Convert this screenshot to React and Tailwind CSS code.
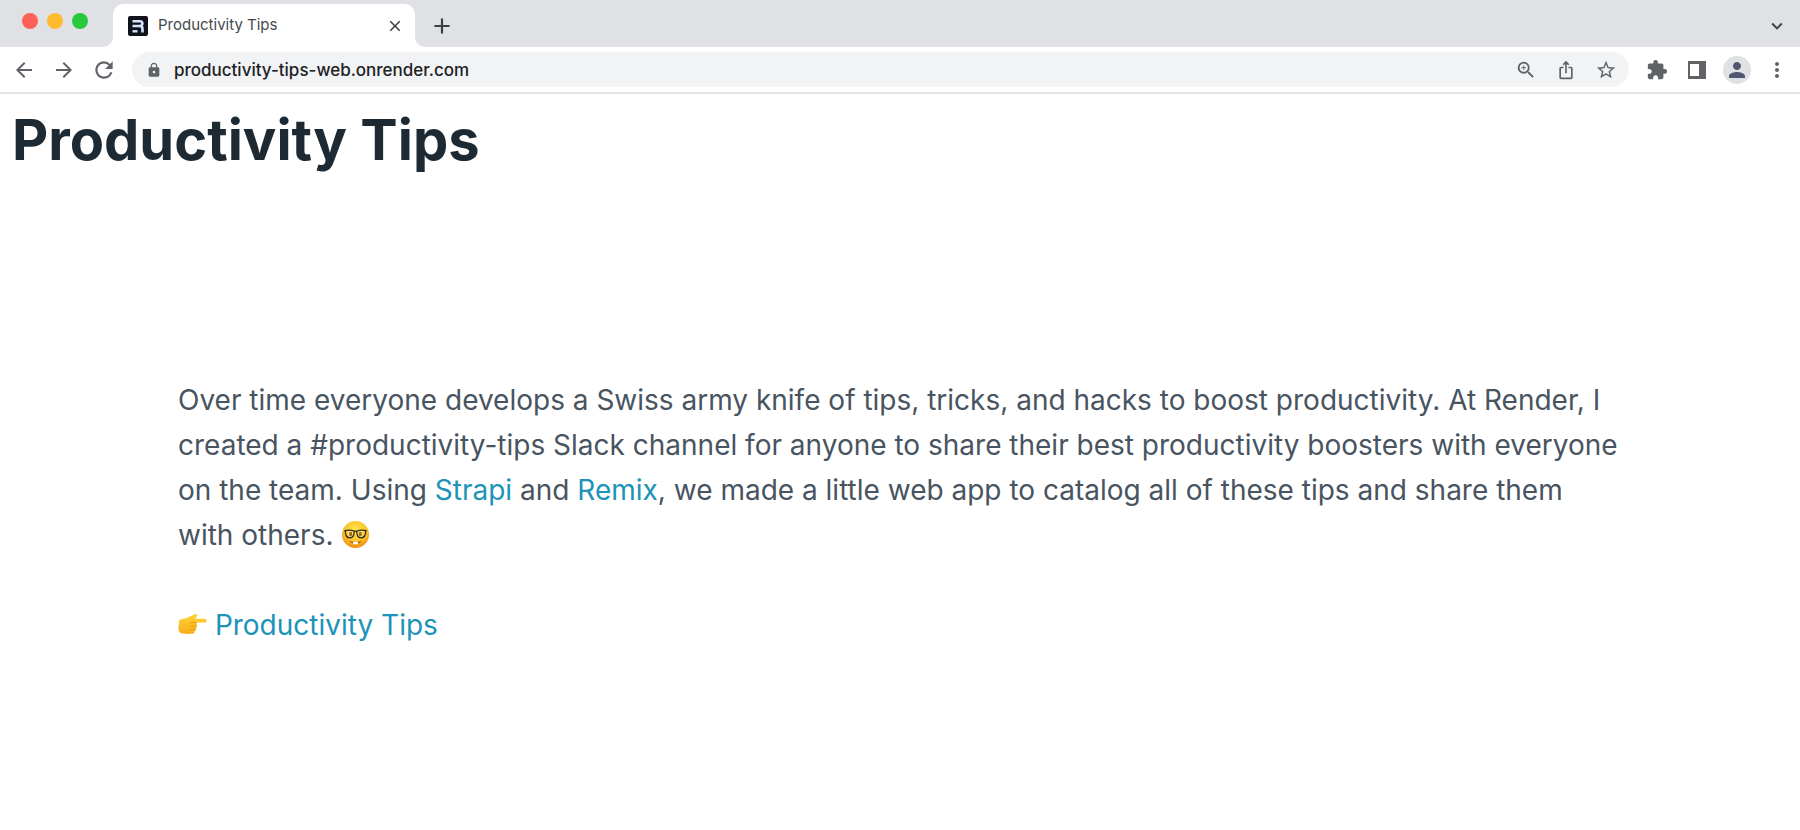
import React from 'react';
import {
    MdAdd,
    MdArrowBack,
    MdArrowForward,
    MdClose,
    MdExpandMore,
    MdExtension,
    MdIosShare,
    MdLock,
    MdMoreVert,
    MdPerson,
    MdRefresh,
    MdStarBorder,
    MdZoomIn,
} from 'react-icons/md';

const IconButton = ({ label, children }) => (
    <button
        type="button"
        aria-label={label}
        className="flex h-9 w-10 shrink-0 items-center justify-center text-[#5f6368]"
    >
        {children}
    </button>
);

const Favicon = () => (
    <svg viewBox="0 0 20 20" className="h-5 w-5 shrink-0" aria-hidden="true">
        <rect width="20" height="20" rx="2" fill="#10131a" />
        <path d="M4.5 5.2H12a2.4 2.4 0 0 1 0 4.8H4.5M11.5 10c2.4 0 3 1 3 2.8v3.700" fill="none" stroke="#d5e2ff" strokeWidth="2.6" />
        <path d="M4.5 15.3h5" stroke="#d5e2ff" strokeWidth="2.4" />
    </svg>
);

const SidePanelIcon = () => (
    <svg viewBox="0 0 18 18" className="h-[18px] w-[18px]" aria-hidden="true">
        <path d="M0 0h18v18H0zM2 3v12h9V3z" fill="#5f6368" fillRule="evenodd" />
    </svg>
);

// The little concave feet where the tab meets the toolbar
const TabFoot = ({ flip }) => (
    <svg
        viewBox="0 0 10 10"
        className={`h-2.5 w-2.5 shrink-0 self-end ${flip ? '-scale-x-100' : ''}`}
        aria-hidden="true"
    >
        <path d="M10 0v10H0A10 10 0 0 0 10 0z" fill="#fff" />
    </svg>
);

const NerdFace = () => (
    <svg viewBox="0 0 30 30" role="img" aria-label="Nerd face" className="inline-block h-[29px] w-[29px] align-[-4px]">
        <defs>
            <radialGradient id="face" cx="0.5" cy="0.35" r="0.65">
                <stop offset="0" stopColor="#ffe94a" />
                <stop offset="0.6" stopColor="#fcc52c" />
                <stop offset="1" stopColor="#ef8c10" />
            </radialGradient>
        </defs>
        <circle cx="15" cy="15" r="14" fill="url(#face)" />
        <ellipse cx="10" cy="14.5" rx="1.6" ry="2.3" fill="#70410b" />
        <ellipse cx="20" cy="14.5" rx="1.6" ry="2.3" fill="#70410b" />
        <g fill="#fff3b0" fillOpacity="0.25" stroke="#33291c" strokeWidth="1.3">
            <path d="M3.4 11.2c3.5-1.1 7.2-1 10.2.2.2 4-1 7.1-4.4 7.1-3.5 0-4.6-2.5-4.7-7" />
            <path d="M26.6 11.2c-3.5-1.1-7.2-1-10.2.2-.2 4 1 7.1 4.4 7.1 3.5 0 4.6-2.5 4.7-7" />
            <path d="M13.5 12c1-.5 2-.5 3 0" fill="none" />
        </g>
        <path d="M8.5 21.3c4 2 9 2 13 0-1.3 2.6-3.6 3.5-6.5 3.5s-5.2-.9-6.5-3.5z" fill="#b5651a" />
        <path d="M12.5 22.5h5V25h-5z" fill="#fff" />
    </svg>
);

const PointingHand = () => (
    <svg viewBox="0 0 30 30" role="img" aria-label="Pointing right" className="inline-block h-[29px] w-[29px] align-[-4px]">
        <defs>
            <linearGradient id="hand" x1="0" y1="0" x2="0" y2="1">
                <stop offset="0" stopColor="#ffd436" />
                <stop offset="1" stopColor="#f9ae1b" />
            </linearGradient>
        </defs>
        <path
            d="M1 12c0-1.500 1-2.300 2.500-2.500 3-.5 5.500-1 8-2.500l6-2.700c1.800-.7 3.200 1 2 2.400L17.600 9H27.500c2.700 0 2.700 4 0 4H19c1 1 1 2.500 0 3.300.8 1.200.5 2.500-.6 3.200.4 1.200-.2 2.300-1.400 2.700 0 1.500-1 2.400-2.600 2.400-5 .2-9 .2-11.400-.8C1 23 .4 21 .5 18z"
            fill="url(#hand)"
        />
        <path d="M12.5 13.500c1.700-.5 4-.6 6.500-.5M13 16.800c2 .2 4 .1 6-.5M12.800 20c2 .3 3.800.2 5.600-.5" fill="none" stroke="#e38e12" strokeWidth="0.8" />
    </svg>
);

const TabStrip = () => (
    <div className="flex h-[47px] items-center bg-[#dfe1e5]">
        <div className="flex gap-[9px] pb-1.5 pl-[22px]">
            <button type="button" aria-label="Close window" className="h-4 w-4 rounded-full bg-[#fe5f57]" />
            <button type="button" aria-label="Minimize window" className="h-4 w-4 rounded-full bg-[#febb2e]" />
            <button type="button" aria-label="Zoom window" className="h-4 w-4 rounded-full bg-[#28c840]" />
        </div>
        <div className="ml-[15px] flex h-[43px] self-end">
            <TabFoot />
            <div className="flex w-[302px] items-center rounded-t-[10px] bg-white pl-[15px] pr-2.5">
                <Favicon />
                <span className="ml-2.5 grow text-[15px] text-[#45494d]">Productivity Tips</span>
                <button type="button" aria-label="Close tab" className="flex h-5 w-5 items-center justify-center text-[#3c4043]">
                    <MdClose className="h-[18px] w-[18px]" />
                </button>
            </div>
            <TabFoot flip />
        </div>
        <button type="button" aria-label="New tab" className="ml-1 mt-1 text-[#3c4043]">
            <MdAdd className="h-[26px] w-[26px]" />
        </button>
        <button type="button" aria-label="Search tabs" className="ml-auto mr-3 mt-1 text-[#3c4043]">
            <MdExpandMore className="h-[22px] w-[22px]" />
        </button>
    </div>
);

const Toolbar = () => (
    <div className="flex h-[47px] items-center border-b-2 border-[#e4e6e5] bg-white pl-1 pr-[3px]">
        <IconButton label="Back"><MdArrowBack className="h-6 w-6" /></IconButton>
        <IconButton label="Forward"><MdArrowForward className="h-6 w-6" /></IconButton>
        <IconButton label="Reload"><MdRefresh className="h-[26px] w-[26px]" /></IconButton>
        <div className="mx-2 flex h-[35px] grow items-center rounded-full bg-[#f1f3f4] pl-[14px] pr-[3px]">
            <MdLock className="h-4 w-4 text-[#5f6368]" />
            <input
                type="text"
                aria-label="Address"
                defaultValue="productivity-tips-web.onrender.com"
                className="ml-3 h-full min-w-0 grow bg-transparent text-[17px] font-medium text-[#202124] outline-none"
            />
            <IconButton label="Zoom"><MdZoomIn className="h-[22px] w-[22px]" /></IconButton>
            <IconButton label="Share"><MdIosShare className="h-5 w-5" /></IconButton>
            <IconButton label="Bookmark this page"><MdStarBorder className="h-[22px] w-[22px]" /></IconButton>
        </div>
        <IconButton label="Extensions"><MdExtension className="h-[22px] w-[22px]" /></IconButton>
        <IconButton label="Side panel"><SidePanelIcon /></IconButton>
        <IconButton label="Profile">
            <span className="flex h-7 w-7 items-center justify-center rounded-full bg-[#dfe1e5]">
                <MdPerson className="h-6 w-6 text-[#515770]" />
            </span>
        </IconButton>
        <IconButton label="Menu"><MdMoreVert className="h-6 w-6" /></IconButton>
    </div>
);

const ContentLink = ({ href, children }) => (
    <a href={href} className="text-[#1c93b8]">{children}</a>
);

const App = () => {
    return (
        <div className="min-h-screen bg-white font-[Inter,sans-serif]">
            <header>
                <TabStrip />
                <Toolbar />
            </header>
            <main>
                <h1 className="px-3 pt-[9px] text-[56px] leading-[75px] font-bold text-[#1d2a33]">Productivity Tips</h1>
                <div className="mt-[200px] px-[178px] text-[28px] leading-[45px] text-[#48545f]">
                    <p>
                        Over time everyone develops a Swiss army knife of tips, tricks, and hacks to boost productivity.
                        At Render, I created a #productivity-tips Slack channel for anyone to share their best
                        productivity boosters with everyone on the team. Using <ContentLink href="#strapi">Strapi</ContentLink> and{' '}
                        <ContentLink href="#remix">Remix</ContentLink>, we made a little web app to catalog all of these
                        tips and share them with others. <NerdFace />
                    </p>
                    <p className="mt-[45px]">
                        <PointingHand /> <ContentLink href="#tips">Productivity Tips</ContentLink>
                    </p>
                </div>
            </main>
        </div>
    );
};

export default App;
